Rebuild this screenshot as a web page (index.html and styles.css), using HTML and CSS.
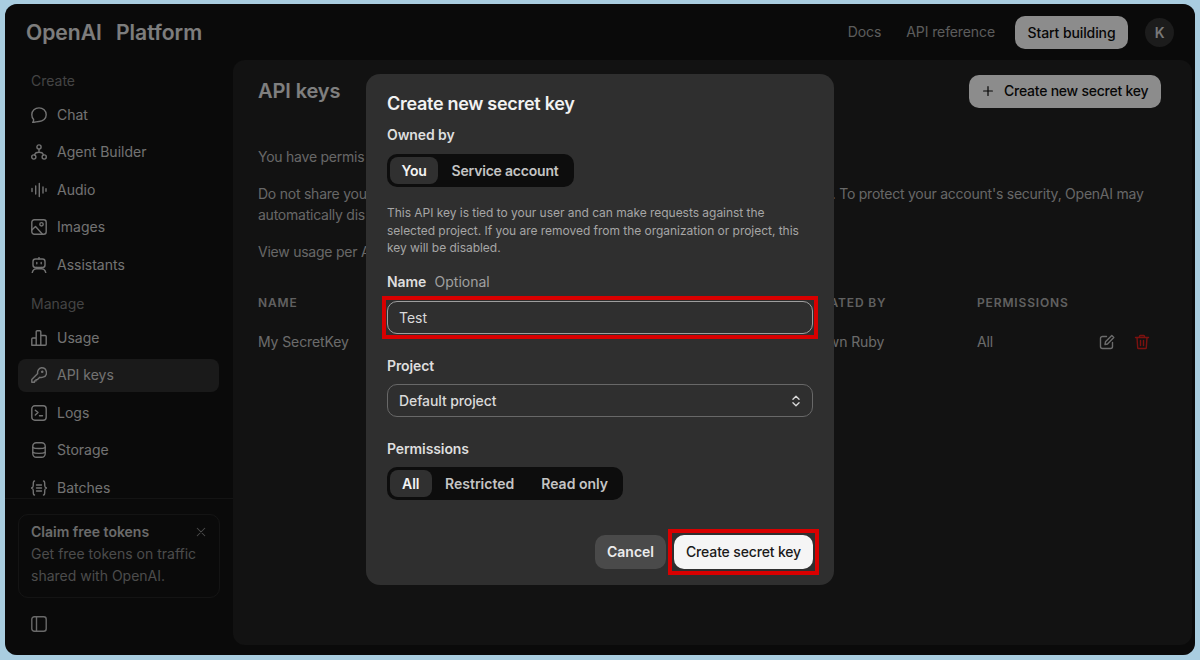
FILE: index.html

```html
<!DOCTYPE html>
<html>
<head>
    <meta charset="UTF-8">
    <title>API keys - OpenAI Platform</title>
    <link rel="stylesheet" href="styles.css">
</head>
<body>
<div class="frame">
    <div class="top">
        <div class="logo">OpenAI<span>Platform</span></div>
        <div class="top-links">
            <a href="#">Docs</a>
            <a href="#">API reference</a>
            <a href="#" class="start">Start building</a>
            <div class="avatar">K</div>
        </div>
    </div>
    <div class="body">
        <div class="side">
            <div class="side-nav">
                <div class="side-label">Create</div>
                <a class="side-item" href="#">
                    <svg viewBox="0 0 16 16"><path d="M8 .9c4 0 7.200 2.900 7.200 6.800S12 14.500 8 14.500c-1.200 0-3.400.6-6.300 1 .8-1 1-2 .9-3C1.400 11.200.8 9.500.8 7.700.8 3.800 4 .9 8 .9z"/></svg>
                    Chat
                </a>
                <a class="side-item" href="#">
                    <svg viewBox="0 0 16 16"><circle cx="8" cy="3" r="2.100"/><circle cx="2.800" cy="13" r="2.100"/><circle cx="13.200" cy="13" r="2.100"/><path d="M8 5.100v3.100M3.600 11c.3-1.800 1.900-2.800 4.400-2.800s4.100 1 4.400 2.800"/></svg>
                    Agent Builder
                </a>
                <a class="side-item" href="#">
                    <svg viewBox="0 0 16 16"><path d="M1 6.500v3M4.700 4v8M8.300 1.500v13M12 5v6M15 6.800v2.400"/></svg>
                    Audio
                </a>
                <a class="side-item" href="#">
                    <svg viewBox="0 0 16 16"><rect x=".8" y=".8" width="14.400" height="14.400" rx="2.500"/><circle cx="10.500" cy="5.300" r="1.700"/><path d="M.8 11l3.700-3.500 7 7.700"/></svg>
                    Images
                </a>
                <a class="side-item" href="#">
                    <svg viewBox="0 0 16 16"><rect x="2" y="2" width="12" height="8.500" rx="2.500"/><path d="M8 .4V2M5.800 5.500v1.200M10.200 5.500v1.200M5.500 10.500v1.300h5v-1.300M1.200 15.800c.6-2.500 2.200-4 4.300-4M14.800 15.800c-.6-2.500-2.200-4-4.300-4"/></svg>
                    Assistants
                </a>
                <div class="side-label second">Manage</div>
                <a class="side-item" href="#">
                    <svg viewBox="0 0 16 16"><path d="M.8 15.200V9c0-.6.400-1 1-1h3.400v7.200zM5.200 15.200V1.800c0-.6.400-1 1-1h2.600c.600 0 1 .400 1 1v13.400zM9.800 15.200V5.500h4.400c.600 0 1 .400 1 1v7.700c0 .600-.400 1-1 1z"/></svg>
                    Usage
                </a>
                <a class="side-item on" href="#">
                    <svg viewBox="0 0 16 16"><path d="M10.500.8a4.800 4.800 0 0 1 1.500 9.400 4.800 4.800 0 0 1-3.200.1L6.500 12.600H5v1.300H3.500v1.400H.8v-2.800l5.900-5.900A4.800 4.800 0 0 1 10.500.8z"/><circle cx="11.200" cy="4.800" r=".6"/></svg>
                    API keys
                </a>
                <a class="side-item" href="#">
                    <svg viewBox="0 0 16 16"><rect x=".8" y=".8" width="14.400" height="14.400" rx="3"/><path d="M4.300 5.200L7 7.600 4.300 10M8.500 10.800h3"/></svg>
                    Logs
                </a>
                <a class="side-item" href="#">
                    <svg viewBox="0 0 16 16"><rect x="1.800" y=".8" width="12.400" height="14.400" rx="3.500"/><path d="M1.800 5.500c2 1.400 10.400 1.400 12.400 0M1.800 10.300c2 1.400 10.400 1.400 12.400 0"/></svg>
                    Storage
                </a>
                <a class="side-item" href="#">
                    <svg viewBox="0 0 16 16"><path d="M3.500 1C1.800 1 2.500 3.500 2.200 6 2 7.500 1.500 8 .3 8c1.200 0 1.700.5 1.900 2 .3 2.500-.4 5 1.300 5M12.500 1c1.700 0 1 2.500 1.300 5 .2 1.500.7 2 1.900 2-1.200 0-1.700.5-1.900 2-.3 2.500.4 5-1.300 5M5.500 5h5M5.500 8h5M5.500 11h5"/></svg>
                    Batches
                </a>
            </div>
            <div class="side-foot">
                <div class="claim">
                    <div class="claim-head">
                        <b>Claim free tokens</b>
                        <svg viewBox="0 0 16 16"><path d="M3 3l10 10M13 3L3 13"/></svg>
                    </div>
                    <p>Get free tokens on traffic shared with OpenAI.</p>
                </div>
                <svg class="toggle" viewBox="0 0 16 16"><rect x=".8" y=".8" width="14.400" height="14.400" rx="2.500"/><path d="M5.500 .8v14.400"/></svg>
            </div>
        </div>
        <div class="main">
            <div class="main-head">
                <h1>API keys</h1>
                <a href="#" class="new-key">
                    <svg viewBox="0 0 16 16"><path d="M8 3v10M3 8h10"/></svg>
                    Create new secret key
                </a>
            </div>
            <div class="main-text">
                <!-- .under = the part of each line that sits behind the dialog -->
                <p>You have permis<span class="under">sion to view and manage all API keys in this project.</span></p>
                <p>Do not share you<span class="under">r API key with others or expose it in the browser or other client-side code</span>. To protect your account's security, OpenAI may automatically dis<span class="under">able any API key that has leaked publicly.</span></p>
                <p>View usage per A<span class="under">PI key on the Usage page.</span></p>
            </div>
            <div class="keys">
                <div class="keys-head">Name</div>
                <div class="keys-head">Created by</div>
                <div class="keys-head">Permissions</div>
                <div></div>
                <div>My SecretKey</div>
                <div>Shawn Ruby</div>
                <div>All</div>
                <div class="keys-act">
                    <svg viewBox="0 0 16 16"><path d="M7.500 2.500H3.500A2 2 0 0 0 1.500 4.500v8a2 2 0 0 0 2 2h8a2 2 0 0 0 2-2v-4M6 10.500l.5-2.700L12.800 1.500l2 2L8.500 10z"/></svg>
                    <svg class="del" viewBox="0 0 16 16"><path d="M1.500 3.500h13M5.500 3.500V2.300c0-.5.400-.8.800-.8h3.400c.4 0 .8.300.8.800v1.200M3 3.500l.7 10.200c0 .5.500.8.900.8h6.800c.4 0 .9-.3.900-.8L13 3.500M6.500 6.500v5M9.500 6.500v5"/></svg>
                </div>
            </div>
        </div>
    </div>
    <div class="scrim"></div>
    <div class="modal">
        <h2>Create new secret key</h2>
        <div class="label first">Owned by</div>
        <div class="seg owner">
            <span class="on">You</span>
            <span>Service account</span>
        </div>
        <p class="note">This API key is tied to your user and can make requests against the selected project. If you are removed from the organization or project, this key will be disabled.</p>
        <div class="label name-label">Name <em>Optional</em></div>
        <div class="field mark">Test</div>
        <div class="label project-label">Project</div>
        <div class="field select">
            Default project
            <svg viewBox="0 0 16 16"><path d="M4.500 6L8 2.500 11.500 6M4.500 10L8 13.500 11.500 10"/></svg>
        </div>
        <div class="label perm-label">Permissions</div>
        <div class="seg">
            <span class="on">All</span>
            <span>Restricted</span>
            <span>Read only</span>
        </div>
        <div class="actions">
            <a href="#" class="btn cancel">Cancel</a>
            <a href="#" class="btn create mark">Create secret key</a>
        </div>
    </div>
</div>
</body>
</html>
```

FILE: styles.css

```css
*{margin:0;padding:0;box-sizing:border-box;}
html,body{height:100%;}
body{font:14px/20px Inter,"Liberation Sans",sans-serif;background:#a9cde0;padding:4px 5px 5px;overflow:hidden;}
a{text-decoration:none;color:inherit;}
svg{fill:none;stroke:currentColor;stroke-width:1.400;stroke-linecap:round;stroke-linejoin:round;flex:none;}

.frame{position:relative;height:100%;background:#131313;border-radius:12px;display:flex;flex-direction:column;overflow:hidden;color:#d0d0d0;}

/* top bar */
.top{height:56px;flex:none;display:flex;align-items:center;justify-content:space-between;padding:0 21px;}
.logo{margin-top:2px;font-size:21.100px;font-weight:600;color:#e4e4e4;}
.logo span{margin-left:14px;}
.top-links{display:flex;align-items:center;color:#a8a8a8;letter-spacing:-.1px;}
.top-links a{margin-left:25px;}
.top-links .start{width:113px;height:33px;margin-left:20px;line-height:33px;text-align:center;background:#fff;color:#0d0d0d;border-radius:10px;font-weight:500;}
.avatar{width:29px;height:29px;margin-left:17px;border-radius:50%;background:#333;color:#dcdcdc;font-weight:600;text-align:center;line-height:29px;}

.body{flex:1;min-height:0;display:flex;}

/* sidebar */
.side{width:228px;flex:none;display:flex;flex-direction:column;}
.side-nav{height:439px;padding:11px 13px 0;border-bottom:1px solid #262626;overflow:hidden;}
.side-label{height:20px;margin-bottom:7px;padding-left:13px;color:#7c7c7c;}
.side-label.second{margin-top:13px;margin-bottom:7px;}
.side-item{display:flex;align-items:center;gap:10px;width:201px;height:33px;margin-bottom:4.500px;padding-left:13px;border-radius:8px;}
.side-item svg{width:16px;height:16px;}
.side-item.on{background:#303030;}
.side-foot{flex:1;padding:15px 13px 0;}
.claim{height:84px;padding:6px 12px;border:1px solid #262626;border-radius:10px;color:#8a8a8a;line-height:22px;}
.claim-head{display:flex;align-items:center;justify-content:space-between;}
.claim-head b{font-weight:600;color:#c4c4c4;}
.claim-head svg{width:12px;height:12px;margin-right:0;}
.toggle{display:block;width:16px;height:16px;margin:18px 0 0 13px;color:#c0c0c0;}

/* main panel */
.main{flex:1;min-width:0;margin:0 3px 10px 0;padding:0 24px 0 25px;background:#212121;border-radius:12px;}
.main-head{display:flex;align-items:center;justify-content:space-between;height:62px;margin-bottom:24px;padding-right:7px;}
.main-head h1{font-size:20px;font-weight:600;color:#e8e8e8;letter-spacing:-.1px;}
.new-key{display:flex;align-items:center;gap:9px;width:192px;height:33px;padding-left:12px;background:#fff;color:#0d0d0d;border-radius:10px;font-weight:500;letter-spacing:-.24px;}
.new-key svg{width:14px;height:14px;}
.main-text p{margin-bottom:16px;line-height:21px;color:#bcbcbc;letter-spacing:-.24px;}
.under{visibility:hidden;}
.keys{display:grid;grid-template-columns:545px 174px 1fr auto;align-items:center;margin-top:31px;padding-right:18px;color:#c4c4c4;letter-spacing:-.1px;}
.keys > div{height:20px;}
.keys-head{margin-bottom:19px;font-size:12px;font-weight:600;letter-spacing:.85px;text-transform:uppercase;color:#b0b0b0;}
.keys-act{display:flex;gap:19px;}
.keys-act svg{width:16px;height:16px;margin-top:2px;}
.keys-act .del{color:#e0201c;}

.scrim{position:absolute;inset:0;background:rgba(0,0,0,.45);}

/* dialog */
.modal{position:absolute;left:361px;top:70px;width:468px;height:511px;padding:20px 21px;background:#2f2f2f;border-radius:14px;color:#e6e6e6;}
.modal h2{font-size:18px;line-height:20px;font-weight:600;color:#f2f2f2;letter-spacing:-.29px;}
.label{font-weight:600;color:#dedede;letter-spacing:-.1px;}
.label.first{margin-top:11px;margin-bottom:9px;}
.label em{margin-left:5px;font-style:normal;font-weight:400;color:#a0a0a0;letter-spacing:0;}
.name-label{margin-top:15px;margin-bottom:9px;}
.project-label{margin-top:22px;margin-bottom:8px;}
.perm-label{margin-top:22px;margin-bottom:8px;}
.seg{display:inline-flex;height:33px;padding:3px;background:#0d0d0d;border-radius:10px;font-weight:600;color:#c4c4c4;}
.seg span{padding:0 13.500px;line-height:27px;border-radius:8px;}
.seg span:last-child{padding-right:12px;}
.seg .on{padding:0 12px;background:#303030;color:#f4f4f4;}
.seg.owner{letter-spacing:-.2px;}
.seg.owner .on{padding:0 11.500px;}
.note{margin-top:17px;font-size:12px;line-height:17.500px;color:#a6a6a6;letter-spacing:-.03px;}
.field{position:relative;display:flex;align-items:center;justify-content:space-between;height:33px;padding:1px 11px 0;border:1px solid #9e9e9e;border-radius:10px;color:#dadada;}
.select{border-color:#686868;font-weight:500;letter-spacing:-.1px;}
.select svg{width:14px;height:14px;margin-right:-2px;stroke-width:1.500;}
.mark{position:relative;}
.mark::after{content:"";position:absolute;inset:-6px;border:4px solid #d90000;}
.actions{display:flex;justify-content:flex-end;gap:8px;margin-top:35px;}
.btn{height:34px;line-height:34px;border-radius:10px;font-weight:600;text-align:center;}
.cancel{width:71px;background:#4a4a4a;color:#ececec;}
.create{width:139px;background:#f5f5f5;color:#1a1a1a;font-weight:500;letter-spacing:-.15px;}
```
